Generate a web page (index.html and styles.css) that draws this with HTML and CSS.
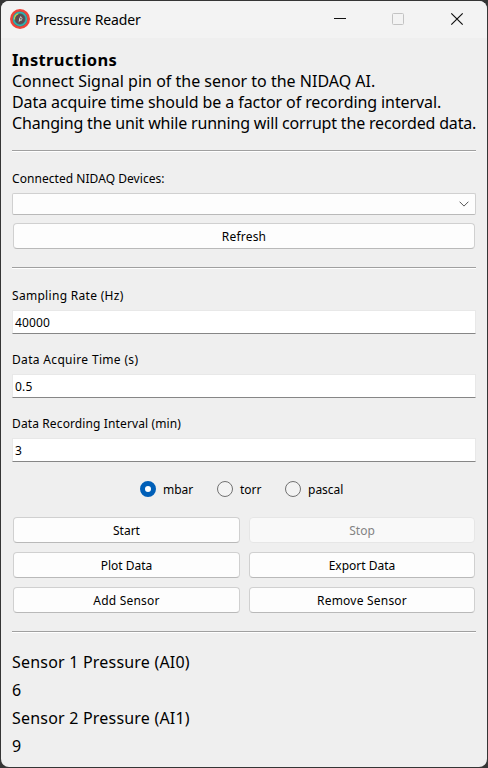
FILE: index.html
```html
<!DOCTYPE html>
<html lang="en">
<head>
<meta charset="utf-8">
<title>Pressure Reader</title>
<link rel="stylesheet" href="styles.css">
</head>
<body>
<main class="window">
  <header class="titlebar">
    <svg class="app-icon" width="20" height="20" viewBox="0 0 20 20">
      <circle cx="10" cy="10" r="10" fill="#ee4438"/>
      <circle cx="10" cy="10" r="7.4" fill="#46707a"/>
      <circle cx="10" cy="10" r="6.4" fill="none" stroke="#2fb5b0" stroke-width="1.5"/>
      <path d="M4.8 10.5A5.3 5.3 0 0 1 8.4 5" fill="none" stroke="#d5d63c" stroke-width="1.4"/>
      <circle cx="10" cy="10" r="4.9" fill="#5c4c50"/>
      <path d="M8.6 13.4l.6-4L10.6 7l1.9 2.2-.7 2.2-1.7.4z" fill="#d0d0d0"/>
      <path d="M10.9 8.8v1.6" stroke="#333" stroke-width="1.1"/>
    </svg>
    <h1 class="title">Pressure Reader</h1>
    <svg class="controls" width="130" height="14" viewBox="0 0 130 14" fill="none">
      <path d="M0 6.5H12" stroke="#111"/>
      <rect x="58.5" y="1.5" width="11" height="11" rx="1" stroke="#c3c3c3"/>
      <path d="M117.3 1.3L128.7 12.7M128.7 1.3L117.3 12.7" stroke="#111" stroke-width="1.2"/>
    </svg>
  </header>
  <section class="instructions">
    <h2>Instructions</h2>
    <p class="line-1">Connect Signal pin of the senor to the NIDAQ AI.</p>
    <p class="line-2">Data acquire time should be a factor of recording interval.</p>
    <p class="line-3">Changing the unit while running will corrupt the recorded data.</p>
  </section>
  <hr>
  <section class="devices">
    <div class="label">Connected NIDAQ Devices:</div>
    <div class="combo">
      <svg width="10" height="6" viewBox="0 0 10 6" fill="none"><path d="M.6 .7L5 5.1L9.4 .7" stroke="#555"/></svg>
    </div>
    <button class="refresh">Refresh</button>
  </section>
  <hr>
  <section class="fields">
    <label class="label rate">Sampling Rate (Hz)</label>
    <div class="input">40000</div>
    <label class="label acquire">Data Acquire Time (s)</label>
    <div class="input">0.5</div>
    <label class="label interval">Data Recording Interval (min)</label>
    <div class="input">3</div>
  </section>
  <section class="units">
    <div class="radio mbar"><i class="dot on"></i>mbar</div>
    <div class="radio torr"><i class="dot"></i>torr</div>
    <div class="radio pascal"><i class="dot"></i>pascal</div>
  </section>
  <section class="actions">
    <button>Start</button><button disabled>Stop</button>
    <button>Plot Data</button><button>Export Data</button>
    <button class="wide">Add Sensor</button><button class="wide">Remove Sensor</button>
  </section>
  <hr>
  <section class="sensors">
    <p>Sensor 1 Pressure (AI0)</p>
    <p>6</p>
    <p>Sensor 2 Pressure (AI1)</p>
    <p>9</p>
  </section>
</main>
</body>
</html>
```
FILE: styles.css
```css
* { box-sizing: border-box; }
body {
  margin: 0;
  height: 768px;
  padding: 1px;
  overflow: hidden;
  background: #353535;
  color: #000;
  font: 12px/16px "Noto Sans", "Liberation Sans", sans-serif;
}
h1, h2, p { margin: 0; }
.window {
  height: 766px;
  overflow: hidden;
  border-radius: 8px;
  background: #efefef;
}
.titlebar {
  display: flex;
  align-items: center;
  height: 37px;
  padding: 0 23px 0 9px;
  background: #f3f3f3;
}
.app-icon { margin-top: -1px; }
.title {
  margin-left: 5px;
  font-size: 14px;
  font-weight: 400;
  line-height: 20px;
  letter-spacing: -.14px;
}
.controls {
  margin-top: -2px;
  margin-left: auto;
}
.instructions {
  height: 112px;
  padding: 12px 0 0 11px;
  font-size: 16px;
  line-height: 21px;
  white-space: nowrap;
}
.instructions h2 {
  padding-bottom: 2px;
  font-size: 16.5px;
  line-height: 19px;
  letter-spacing: .38px;
}
.line-2 { letter-spacing: -.09px; }
.line-3 { letter-spacing: -.18px; }
hr {
  height: 2px;
  margin: 0 11px;
  border: 0;
  border-top: 1px solid #a0a0a0;
  background: #fff;
}
.devices {
  height: 115px;
  padding: 19px 11px 0;
}
.label {
  display: block;
  height: 16px;
  letter-spacing: .05px;
}
.rate { letter-spacing: .3px; }
.acquire { letter-spacing: .33px; }
.interval { letter-spacing: .12px; }
.combo {
  display: flex;
  align-items: center;
  justify-content: flex-end;
  height: 22px;
  margin-top: 6px;
  padding-right: 6px;
  border: 1px solid #d0d0d0;
  border-bottom-color: #b9b9b9;
  border-radius: 2px;
  background: #fdfdfd;
}
button {
  height: 26px;
  padding: 1px 0 0;
  border: 1px solid #d0d0d0;
  border-bottom-color: #b9b9b9;
  border-radius: 4px;
  background: #fdfdfd;
  color: #000;
  font: inherit;
}
button:disabled {
  border-color: #e6e6e6;
  background: #f9f9f9;
  color: #838383;
}
.refresh {
  display: block;
  width: 462px;
  margin: 8px 1px 0;
  letter-spacing: .2px;
}
.wide { letter-spacing: .22px; }
.fields { padding: 19px 11px 0; }
.input {
  height: 24px;
  margin: 6px 0 18px;
  padding: 4px 2px 0;
  border: 1px solid #e8e8e8;
  border-bottom-color: #868686;
  background: #fff;
  letter-spacing: .15px;
}
.units {
  display: flex;
  height: 16px;
  margin-top: 19px;
  padding-left: 139px;
}
.radio {
  display: flex;
  gap: 7px;
  width: 77px;
  line-height: 18px;
}
.torr { width: 68px; }
.dot {
  width: 16px;
  height: 16px;
  border: 1px solid #727272;
  border-radius: 50%;
  background: #f3f3f3;
}
.dot.on {
  border: 5px solid #005fb8;
  background: #fff;
}
.actions {
  display: grid;
  grid-template-columns: 227px 226px;
  gap: 9px;
  height: 114px;
  margin: 20px 12px 0;
  align-content: start;
}
.sensors {
  padding: 15px 11px 0;
  font-size: 16px;
  line-height: 28px;
  letter-spacing: .2px;
}
```
